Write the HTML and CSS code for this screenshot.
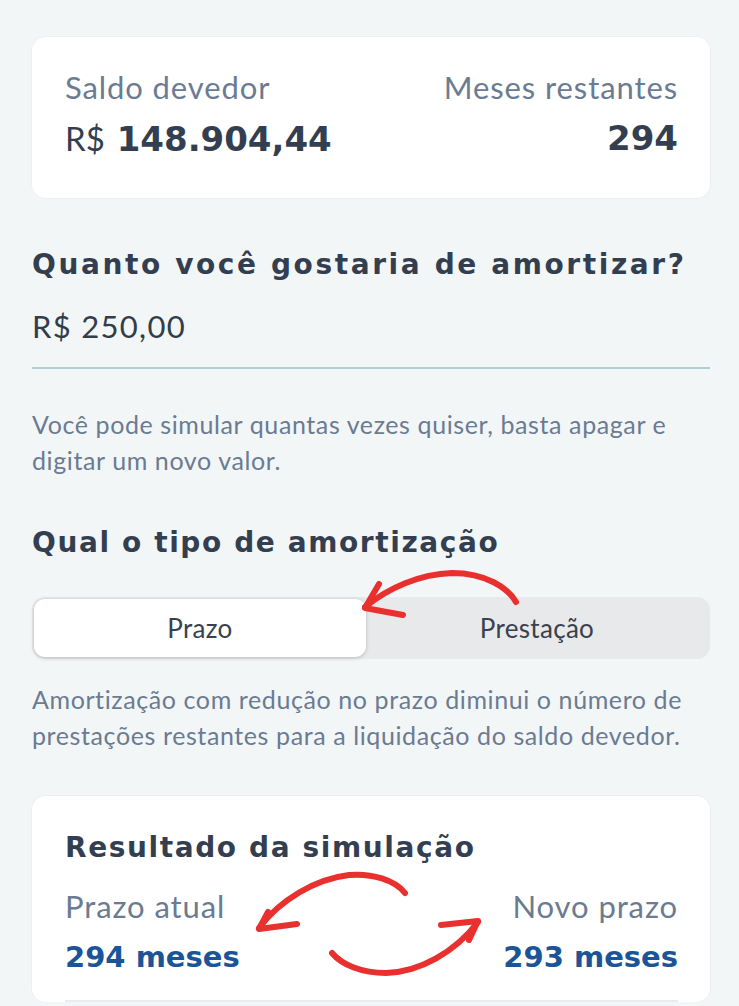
FILE: index.html
```html
<!DOCTYPE html>
<html lang="pt-BR">
<head>
<meta charset="utf-8">
<title>Amortização</title>
<link rel="stylesheet" href="styles.css">
</head>
<body>
<main class="page">
  <section class="card summary">
    <div class="col">
      <div class="label">Saldo devedor</div>
      <div class="value"><span class="currency">R$</span> 148.904,44</div>
    </div>
    <div class="col right">
      <div class="label">Meses restantes</div>
      <div class="value">294</div>
    </div>
  </section>

  <h2 class="heading q1">Quanto você gostaria de amortizar?</h2>
  <div class="input">R$ 250,00</div>
  <p class="help">Você pode simular quantas vezes quiser, basta apagar e digitar um novo valor.</p>

  <h2 class="heading q2">Qual o tipo de amortização</h2>
  <div class="segment">
    <div class="opt active">Prazo</div>
    <div class="opt">Prestação</div>
  </div>
  <p class="help desc">Amortização com redução no prazo diminui o número de prestações restantes para a liquidação do saldo devedor.</p>

  <section class="card result">
    <h3 class="heading r-title">Resultado da simulação</h3>
    <div class="result-row">
      <div class="col">
        <div class="label">Prazo atual</div>
        <div class="value blue">294 meses</div>
      </div>
      <div class="col right">
        <div class="label">Novo prazo</div>
        <div class="value blue">293 meses</div>
      </div>
    </div>
    <div class="divider"></div>
  </section>
</main>

<svg class="annotations" width="739" height="1006" viewBox="0 0 739 1006" aria-hidden="true">
  <path d="M516 602 C 508 588, 486 573, 452 573 C 420 574, 388 588, 365 607" />
  <path d="M379 584 L 365 608 L 403 615" />
  <path d="M405 893 C 395 880, 372 873, 349 875 C 315 879, 280 900, 259 928" />
  <path d="M268 912 L 259 929 L 297 924" />
  <path d="M332 953 C 342 965, 362 973, 386 973 C 420 972, 455 952, 478 922" />
  <path d="M441 925 L 478 921 L 469 940" />
</svg>
</body>
</html>
```

FILE: styles.css
```css
* { box-sizing: border-box; }

body {
  position: relative;
  margin: 0;
  background: #f3f6f7;
  font-family: Lato, "Open Sans", sans-serif;
  color: #333f4f;
}

.page {
  padding: 37px 29px 0 32px;
}

.card {
  background: #ffffff;
  border-radius: 14px;
  box-shadow: 0 0 0 1px #edf0f2;
}

.summary {
  display: flex;
  justify-content: space-between;
  padding: 33px 32px 39px 33px;
}

.col { display: flex; flex-direction: column; }
.col.right { align-items: flex-end; }

.label {
  font-size: 31px;
  line-height: 34px;
  letter-spacing: 0.9px;
  color: #6a7b92;
}

.value {
  margin-top: 14px;
  font-family: "DejaVu Sans", sans-serif;
  font-size: 34px;
  line-height: 40px;
  font-weight: 700;
  color: #333f50;
}

.currency {
  font-family: Lato, sans-serif;
  font-weight: 400;
  font-size: 33px;
}

.heading {
  margin: 0;
  font-family: "DejaVu Sans", sans-serif;
  font-size: 28px;
  line-height: 34px;
  font-weight: 700;
  letter-spacing: 1.6px;
  color: #333f50;
}

.q1 {
  margin-top: 50px;
  letter-spacing: 2.6px;
}

.input {
  margin-top: 24px;
  padding-bottom: 21px;
  font-size: 31px;
  line-height: 40px;
  letter-spacing: 1.3px;
  color: #333d4a;
  border-bottom: 2px solid #b4ccd4;
}

.help {
  margin: 37px 0 0;
  font-size: 25px;
  line-height: 36px;
  letter-spacing: 0.6px;
  color: #6a7b92;
}

.q2 { margin-top: 48px; }

.segment {
  display: grid;
  grid-template-columns: 332px 1fr;
  margin-top: 37px;
  padding: 2px;
  background: #e8e9ea;
  border-radius: 13px;
}

.opt {
  height: 58px;
  display: flex;
  align-items: center;
  justify-content: center;
  font-size: 26px;
  letter-spacing: 0.3px;
  color: #39414d;
}

.opt.active {
  background: #ffffff;
  border-radius: 11px;
  box-shadow: 0 1px 4px rgba(0, 0, 0, 0.2);
}

.desc { margin-top: 22px; }

.result {
  margin-top: 43px;
  padding: 35px 32px 0 33px;
}

.result-row {
  display: flex;
  justify-content: space-between;
  margin-top: 24px;
}

.value.blue {
  margin-top: 16px;
  font-size: 29px;
  line-height: 36px;
  color: #1b5597;
}

.divider {
  margin-top: 25px;
  height: 2px;
  background: #e8ecef;
}

.annotations {
  position: absolute;
  top: 0;
  left: 0;
  pointer-events: none;
  fill: none;
  stroke: #e8302f;
  stroke-width: 6;
  stroke-linecap: round;
  stroke-linejoin: round;
}
```
